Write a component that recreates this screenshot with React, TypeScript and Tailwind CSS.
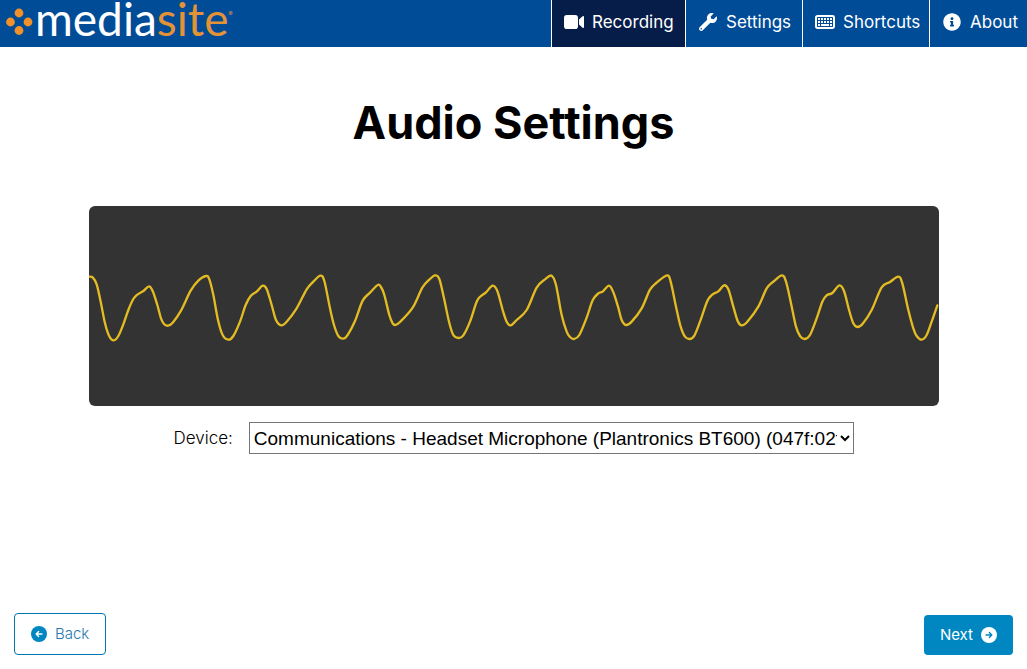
import React from "react";
import { FaWrench, FaInfoCircle } from "react-icons/fa";

type Point = [number, number];

// Oscilloscope samples, three units per pixel of the full-width panel.
const samples: Point[] = [
  [27, 65], [38, 67], [50, 88], [62, 140], [75, 205], [87, 242], [101, 256], [115, 243], [130, 208], [145, 165],
  [160, 132], [172, 119], [190, 108], [207, 94], [218, 108], [232, 150], [243, 190], [252, 207], [264, 212],
  [278, 203], [303, 167], [332, 107], [355, 77], [378, 63], [388, 73], [400, 120], [414, 195], [428, 240],
  [445, 254], [460, 243], [480, 200], [497, 150], [512, 123], [530, 110], [548, 92], [560, 102], [575, 150],
  [588, 195], [604, 211], [620, 200], [650, 160], [680, 103], [700, 80], [721, 62], [733, 78], [750, 160],
  [762, 210], [775, 243], [790, 251], [803, 240], [825, 198], [848, 137], [870, 113], [893, 90], [903, 96],
  [913, 120], [928, 180], [938, 205], [946, 210], [960, 201], [998, 158], [1027, 98], [1048, 74], [1065, 61],
  [1078, 72], [1092, 130], [1107, 200], [1120, 240], [1136, 249], [1150, 241], [1170, 200], [1190, 140],
  [1203, 123], [1218, 112], [1238, 92], [1252, 108], [1268, 165], [1280, 200], [1292, 211], [1310, 195],
  [1340, 165], [1370, 98], [1395, 73], [1415, 62], [1428, 90], [1445, 180], [1460, 230], [1470, 246],
  [1482, 252], [1498, 240], [1520, 188], [1538, 136], [1555, 115], [1568, 110], [1587, 92], [1600, 112],
  [1614, 155], [1625, 195], [1638, 210], [1655, 200], [1685, 160], [1710, 104], [1730, 83], [1761, 61],
  [1772, 80], [1788, 155], [1802, 215], [1815, 245], [1830, 252], [1843, 242], [1860, 200], [1882, 138],
  [1897, 119], [1915, 109], [1932, 91], [1945, 103], [1960, 155], [1973, 198], [1985, 211], [2002, 200],
  [2035, 155], [2060, 100], [2080, 80], [2106, 61], [2118, 80], [2132, 140], [2148, 215], [2160, 243],
  [2174, 252], [2190, 240], [2210, 190], [2227, 140], [2240, 121], [2257, 114], [2278, 91], [2292, 108],
  [2308, 168], [2320, 205], [2332, 216], [2348, 206], [2375, 165], [2405, 97], [2430, 81], [2455, 65],
  [2467, 85], [2485, 165], [2500, 220], [2510, 243], [2525, 254], [2540, 240], [2555, 200], [2572, 151],
];

function smoothPath(points: Point[]): string {
  let d = `M${points[0][0]} ${points[0][1]}`;
  for (let i = 0; i < points.length - 1; i++) {
    const a = points[Math.max(i - 1, 0)];
    const b = points[i];
    const c = points[i + 1];
    const e = points[Math.min(i + 2, points.length - 1)];
    d += `C${b[0] + (c[0] - a[0]) / 6} ${b[1] + (c[1] - a[1]) / 6} ${c[0] - (e[0] - b[0]) / 6} ${c[1] - (e[1] - b[1]) / 6} ${c[0]} ${c[1]}`;
  }
  return d;
}

function VideoIcon() {
  return (
    <svg viewBox="0 0 20 14" className="h-[14px] w-5" fill="currentColor" aria-hidden="true">
      <rect x="0" y="0" width="14" height="14" rx="2.8" />
      <path d="M15 4.4 18.6 1.2Q20 .6 20 2V12Q20 13.4 18.6 12.8L15 9.6Z" />
    </svg>
  );
}

function KeyboardIcon() {
  return (
    <svg viewBox="0 0 20 14" className="h-[14px] w-5" fill="none" stroke="currentColor" aria-hidden="true">
      <rect x="1" y="1" width="18" height="12" rx="1.4" strokeWidth="2" />
      <path d="M3 4H17M3 7H17" strokeWidth="2" strokeDasharray="2 1" />
      <path d="M3 10H5M6 10H14M15 10H17" strokeWidth="2" />
    </svg>
  );
}

function ArrowCircle({ left = false }: { left?: boolean }) {
  return (
    <svg viewBox="0 0 16 16" className="size-4" aria-hidden="true">
      <circle cx="8" cy="8" r="8" fill="currentColor" />
      <path
        d={left ? "M11 8H5.2M7.6 5.6 5.2 8l2.4 2.4" : "M5 8H10.8M8.4 5.6 10.8 8l-2.4 2.4"}
        fill="none"
        stroke={left ? "#fff" : "#0086c0"}
        strokeWidth="1.4"
        strokeLinecap="round"
        strokeLinejoin="round"
      />
    </svg>
  );
}

function Logo() {
  return (
    <a href="#" className="flex items-start pl-[6px] text-white" aria-label="mediasite">
      <svg viewBox="0 0 27 28" className="mt-[8px] h-7 w-[27px]" fill="#f29129" aria-hidden="true">
        <circle cx="13" cy="5" r="4.4" />
        <circle cx="4.5" cy="14" r="4.4" />
        <circle cx="22" cy="14" r="4.4" />
        <circle cx="13" cy="22.5" r="4.4" />
      </svg>
      <span className="ml-[2px] font-['Lato',sans-serif] text-[46px] leading-[38px] font-normal">
        media<span className="text-[#e39237]">site</span>
      </span>
      <span className="mt-[10px] text-[6px] leading-[8px] text-[#e39237]">®</span>
    </a>
  );
}

const navItem = "flex h-[47px] items-center gap-2 border-l border-white pb-[3px] pl-3 text-[17px] leading-6";

export default function App() {
  return (
    <div className="flex min-h-screen flex-col bg-white font-['Inter',sans-serif] text-black">
      <header className="flex h-[47px] justify-between bg-[#004c97] text-white">
        <Logo />
        <nav className="flex">
          <a href="#recording" aria-current="page" className={`${navItem} w-[134px] bg-[#071d49]`}>
            <VideoIcon />
            Recording
          </a>
          <a href="#settings" className={`${navItem} w-[117px]`}>
            <span className="flex w-5 justify-center"><FaWrench size={18} /></span>
            Settings
          </a>
          <a href="#shortcuts" className={`${navItem} w-[127px]`}>
            <KeyboardIcon />
            Shortcuts
          </a>
          <a href="#about" className={`${navItem} w-[98px]`}>
            <span className="flex w-5 justify-center"><FaInfoCircle size={18} /></span>
            About
          </a>
        </nav>
      </header>

      <main className="flex flex-1 flex-col items-center px-6">
        <h1 className="mt-[48px] text-[45px] leading-14 font-bold">Audio Settings</h1>
        <div className="mt-[55px] w-full max-w-[850px] overflow-hidden rounded-md bg-[#333333]">
          <svg viewBox="27 -147 2550 600" className="block w-full" role="img" aria-label="Audio level">
            <path d={smoothPath(samples)} fill="none" stroke="#e3bb22" strokeWidth="7" strokeLinecap="round" strokeLinejoin="round" />
          </svg>
        </div>
        <div className="mt-4 flex w-full max-w-[680px] items-center justify-between gap-4">
          <label htmlFor="device" className="text-[17px] leading-6 font-light">Device:</label>
          <select
            id="device"
            className="h-8 w-full max-w-[605px] border border-[#767676] bg-white font-['Liberation_Sans',sans-serif] text-[19px]"
          >
            <option>Communications - Headset Microphone (Plantronics BT600) (047f:02f7)</option>
          </select>
        </div>
      </main>

      <footer className="flex items-end justify-between px-[14px] pb-[14px] text-[15px]">
        <button type="button" className="flex h-[42px] items-center gap-2 rounded border border-[#0077b3] px-4 font-light text-[#2878b0]">
          <span className="text-[#0086c0]"><ArrowCircle left /></span>
          Back
        </button>
        <button type="button" className="flex h-10 items-center gap-2 rounded bg-[#0086c0] px-4 text-white">
          Next
          <ArrowCircle />
        </button>
      </footer>
    </div>
  );
}
